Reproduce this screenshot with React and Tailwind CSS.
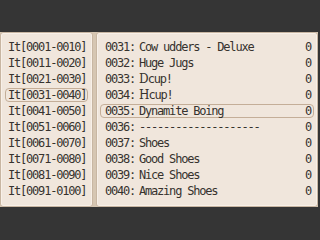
import React from 'react';

const groups = [
  'It[0001-0010]', 'It[0011-0020]', 'It[0021-0030]', 'It[0031-0040]', 'It[0041-0050]',
  'It[0051-0060]', 'It[0061-0070]', 'It[0071-0080]', 'It[0081-0090]', 'It[0091-0100]',
];

const items = [
  { id: '0031', name: 'Cow udders - Deluxe' },
  { id: '0032', name: 'Huge Jugs' },
  { id: '0033', name: 'cup!', big: 'D' },
  { id: '0034', name: 'cup!', big: 'H' },
  { id: '0035', name: 'Dynamite Boing' },
  { id: '0036', name: '--------------------' },
  { id: '0037', name: 'Shoes' },
  { id: '0038', name: 'Good Shoes' },
  { id: '0039', name: 'Nice Shoes' },
  { id: '0040', name: 'Amazing Shoes' },
];

const font = "font-['DejaVu_Sans_Mono','Liberation_Mono',monospace] text-[12px] tracking-[-1.2px] text-[#36322e] leading-none";

export default function App() {
  return (
    <div className="w-[320px] h-[240px] bg-[#353535] flex flex-col">
      <div className="h-[32px]" />
      <div className="flex h-[175px] w-[318px] bg-[#d6c6b2]">
        {/* group list */}
        <div className="w-[93px] h-full bg-[#f0e6dc] border border-[#c8b6a2] shadow-[inset_0_0_0_1px_#f8f0e8] rounded-[3px] pt-[6px] px-[4px]">
          {groups.map((g, i) => (
            <div key={g} className="h-[16px] py-[1px]">
              <div
                className={`h-[14px] flex items-center pl-[2px] rounded-[4px] border ${
                  i === 3 ? 'border-[#c4ae98]' : 'border-transparent'
                } ${font}`}
              >
                <span className="scale-y-[1.08]">{g}</span>
              </div>
            </div>
          ))}
        </div>
        <div className="w-[3px]" />
        {/* item list */}
        <div className="flex-1 h-full bg-[#f0e6dc] border border-[#c8b6a2] shadow-[inset_0_0_0_1px_#f8f0e8] rounded-[3px] pt-[6px] px-[3px]">
          {items.map((it, i) => (
            <div key={it.id} className="h-[16px] py-[1px]">
              <div
                className={`h-[14px] flex items-center pl-[4px] pr-[2px] rounded-[4px] border ${
                  i === 4 ? 'border-[#c4ae98]' : 'border-transparent'
                } ${font}`}
              >
                <span className="w-[34px] scale-y-[1.08]">{it.id}:</span>
                <span className="flex-1 scale-y-[1.08]">
                  {it.big && (
                    <span className="font-['DejaVu_Serif',serif] text-[12px] tracking-normal mr-[-1px]">{it.big}</span>
                  )}
                  {it.name}
                </span>
                <span className="scale-y-[1.08]">0</span>
              </div>
            </div>
          ))}
        </div>
      </div>
    </div>
  );
}
